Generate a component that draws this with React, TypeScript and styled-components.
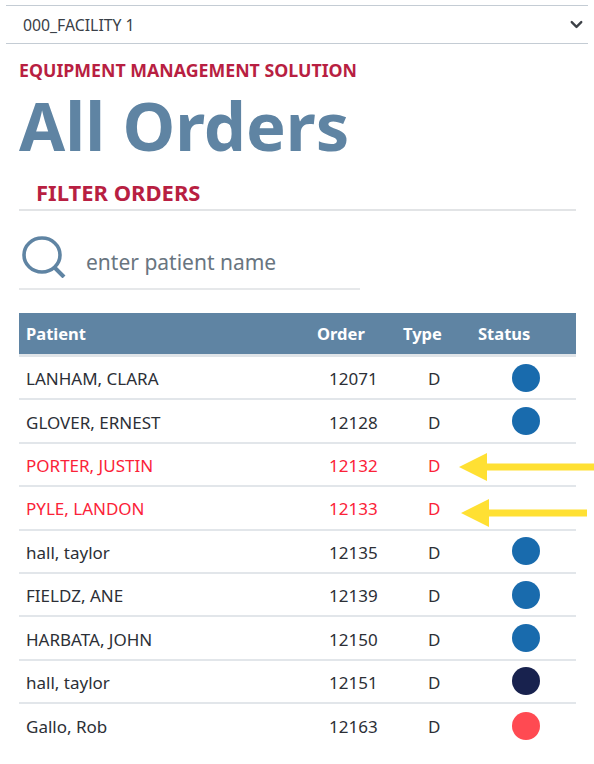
import React from 'react';
import styled, { createGlobalStyle } from 'styled-components';
import { ChevronDown } from 'lucide-react';

const GlobalStyle = createGlobalStyle`
    html, body {
        margin: 0;
        padding: 0;
        background: #fff;
        font-family: 'Noto Sans', 'Open Sans', sans-serif;
    }
`;

const Page = styled.div`
    width: 594px;
    height: 764px;
    overflow: hidden;
    padding-top: 5px;
    box-sizing: border-box;
`;

const FacilityBar = styled.div`
    margin: 0 6px;
    height: 39px;
    box-sizing: border-box;
    border-top: 1px solid #c4ccd4;
    border-bottom: 1px solid #c4ccd4;
    display: flex;
    align-items: center;
    justify-content: space-between;
    padding: 0 2px 0 17px;
    font-size: 15.8px;
    color: #3a4048;
`;

const Content = styled.div`
    margin: 0 18px 0 19px;
`;

const Eyebrow = styled.div`
    margin-top: 13px;
    font-size: 17.75px;
    line-height: 26px;
    font-weight: 700;
    color: #b81f42;
`;

const Title = styled.h1`
    margin: 7px 0 0;
    font-size: 66.8px;
    line-height: 72px;
    font-weight: 700;
    color: #5f84a3;
`;

const FilterHeading = styled.h2`
    margin: 15px 0 0;
    padding: 0 0 2px 17px;
    font-size: 22px;
    line-height: 30px;
    font-weight: 700;
    color: #b81f42;
    border-bottom: 2px solid #e2e4e6;
`;

const SearchRow = styled.div`
    margin-top: 25px;
    width: 341px;
    height: 54px;
    box-sizing: border-box;
    padding: 0 0 10px 3px;
    border-bottom: 2px solid #e6e8ea;
    display: flex;
    align-items: center;
    gap: 20px;
    font-size: 21px;
    color: #69757f;
`;

const Placeholder = styled.span`
    margin-top: 10px;
`;

const Table = styled.div`
    margin-top: 23px;
`;

const columns = '291px 86px 75px 1fr';

const HeaderRow = styled.div`
    display: grid;
    grid-template-columns: ${columns};
    align-items: center;
    height: 41px;
    padding-left: 7px;
    background: #5f84a3;
    border-bottom: 3px solid #e0e4e8;
    color: #fff;
    font-size: 16.5px;
    font-weight: 700;
`;

const Row = styled.div<{ $alert?: boolean }>`
    position: relative;
    display: grid;
    grid-template-columns: ${columns};
    align-items: center;
    height: 43.4px;
    box-sizing: border-box;
    padding-left: 7px;
    border-bottom: 2px solid #e2e6ea;
    font-size: 17px;
    color: ${(props) => (props.$alert ? '#fb2238' : '#2c2f36')};

    &:last-child {
        border-bottom: none;
    }
`;

const NameCell = styled.div`
    padding-top: 2px;
`;

const OrderCell = styled.div`
    padding: 2px 0 0 12px;
`;

const TypeCell = styled.div`
    padding: 2px 0 0 25px;
`;

const StatusCell = styled.div`
    padding-left: 34px;
    display: flex;
`;

const StatusDot = styled.span<{ $color: string }>`
    width: 28px;
    height: 28px;
    border-radius: 50%;
    background: ${(props) => props.$color};
`;

const Arrow = styled.svg<{ $left: number; $top: number }>`
    position: absolute;
    left: ${(props) => props.$left}px;
    top: ${(props) => props.$top}px;
    height: 28px;
    overflow: visible;
`;

const BLUE = '#196bad';
const NAVY = '#18224e';
const RED = '#ff4a52';

type Order = {
    name: string;
    id: number;
    status?: string;
    arrow?: { left: number; top: number; width: number };
};

const orders: Order[] = [
    { name: 'LANHAM, CLARA', id: 12071, status: BLUE },
    { name: 'GLOVER, ERNEST', id: 12128, status: BLUE },
    { name: 'PORTER, JUSTIN', id: 12132, arrow: { left: 440, top: 9, width: 135 } },
    { name: 'PYLE, LANDON', id: 12133, arrow: { left: 442, top: 12, width: 126 } },
    { name: 'hall, taylor', id: 12135, status: BLUE },
    { name: 'FIELDZ, ANE', id: 12139, status: BLUE },
    { name: 'HARBATA, JOHN', id: 12150, status: BLUE },
    { name: 'hall, taylor', id: 12151, status: NAVY },
    { name: 'Gallo, Rob', id: 12163, status: RED },
];

export default function App() {
    return (
        <Page>
            <GlobalStyle />
            <FacilityBar>
                000_FACILITY 1
                <ChevronDown size={19} strokeWidth={3} color='#3d4147' />
            </FacilityBar>
            <Content>
                <Eyebrow>EQUIPMENT MANAGEMENT SOLUTION</Eyebrow>
                <Title>All Orders</Title>
                <FilterHeading>FILTER ORDERS</FilterHeading>
                <SearchRow>
                    <svg width='44' height='42' viewBox='0 0 44 42' fill='none' stroke='#5f84a3' strokeWidth='3.6'>
                        <ellipse cx='20' cy='19' rx='18' ry='17' />
                        <path d='M32 31 L42 41' strokeWidth='4' />
                    </svg>
                    <Placeholder>enter patient name</Placeholder>
                </SearchRow>
                <Table>
                    <HeaderRow>
                        <div>Patient</div>
                        <div>Order</div>
                        <div>Type</div>
                        <div>Status</div>
                    </HeaderRow>
                    {orders.map((order) => (
                        <Row key={order.id} $alert={!order.status}>
                            <NameCell>{order.name}</NameCell>
                            <OrderCell>{order.id}</OrderCell>
                            <TypeCell>D</TypeCell>
                            <StatusCell>{order.status && <StatusDot $color={order.status} />}</StatusCell>
                            {order.arrow && (
                                <Arrow
                                    $left={order.arrow.left}
                                    $top={order.arrow.top}
                                    width={order.arrow.width}
                                    viewBox={`0 0 ${order.arrow.width} 28`}
                                >
                                    <path d={`M0 14 L28 0 V10.5 H${order.arrow.width} V17.5 H28 V28 Z`} fill='#ffe033' />
                                </Arrow>
                            )}
                        </Row>
                    ))}
                </Table>
            </Content>
        </Page>
    );
}
